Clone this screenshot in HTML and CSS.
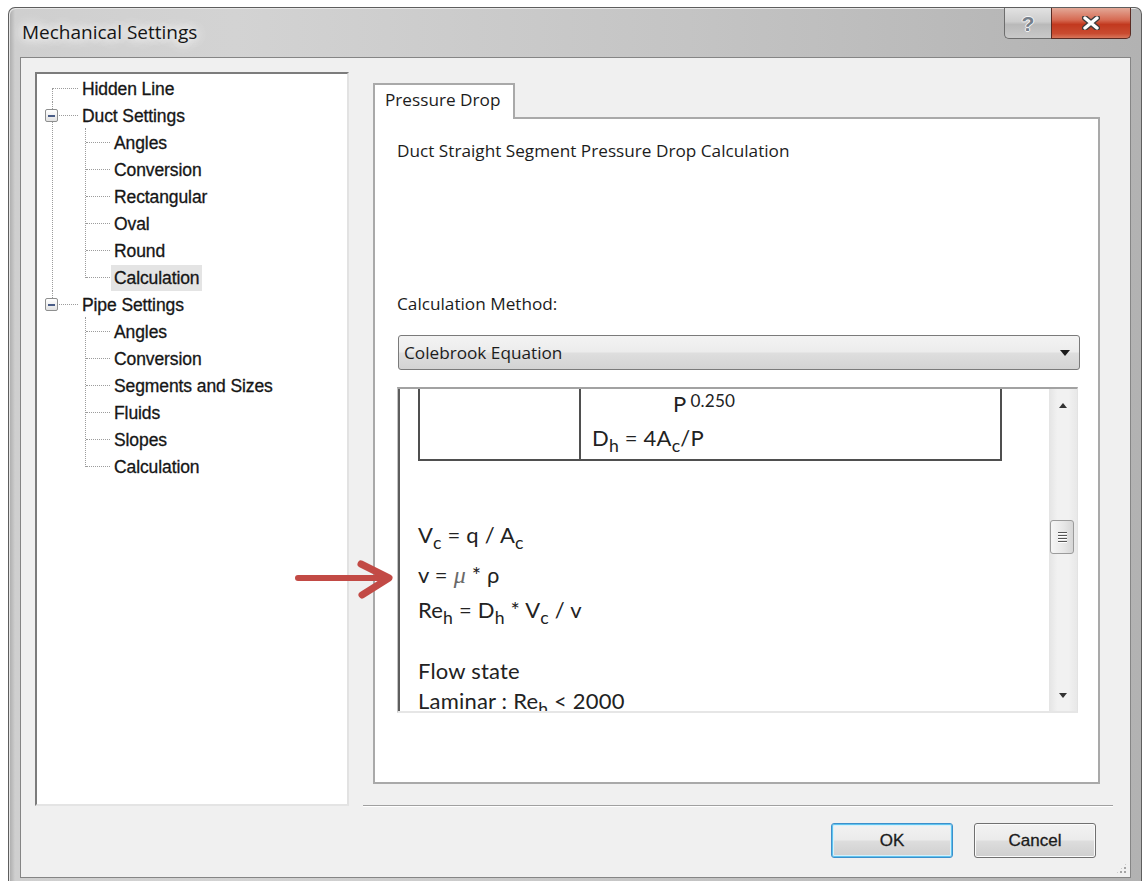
FILE: index.html
```html
<!DOCTYPE html>
<html lang="en">
<head>
<meta charset="utf-8">
<title>Mechanical Settings</title>
<link rel="stylesheet" href="styles.css">
</head>
<body>
<div class="window">
  <div class="titlebar">
    <span class="title">Mechanical Settings</span>
    <div class="caption-buttons">
      <div class="cap-btn help"><span class="help-glyph">?</span></div>
      <div class="cap-btn close">
        <svg width="18" height="14" viewBox="0 0 18 14">
          <path d="M3 2 L15 12 M15 2 L3 12" stroke="#3d3d3d" stroke-width="6" stroke-linecap="round"/>
          <path d="M3 2 L15 12 M15 2 L3 12" stroke="#ffffff" stroke-width="3.4" stroke-linecap="round"/>
        </svg>
      </div>
    </div>
  </div>

  <div class="client">
    <div class="tree">
      <ul class="tree-list root">
        <li class="node">
          <div class="row"><span class="expander empty"></span><span class="label">Hidden Line</span></div>
        </li>
        <li class="node">
          <div class="row"><span class="expander"></span><span class="label">Duct Settings</span></div>
          <ul class="tree-list children">
            <li class="leaf"><div class="row"><span class="label">Angles</span></div></li>
            <li class="leaf"><div class="row"><span class="label">Conversion</span></div></li>
            <li class="leaf"><div class="row"><span class="label">Rectangular</span></div></li>
            <li class="leaf"><div class="row"><span class="label">Oval</span></div></li>
            <li class="leaf"><div class="row"><span class="label">Round</span></div></li>
            <li class="leaf selected"><div class="row"><span class="label">Calculation</span></div></li>
          </ul>
        </li>
        <li class="node">
          <div class="row"><span class="expander"></span><span class="label">Pipe Settings</span></div>
          <ul class="tree-list children">
            <li class="leaf"><div class="row"><span class="label">Angles</span></div></li>
            <li class="leaf"><div class="row"><span class="label">Conversion</span></div></li>
            <li class="leaf"><div class="row"><span class="label">Segments and Sizes</span></div></li>
            <li class="leaf"><div class="row"><span class="label">Fluids</span></div></li>
            <li class="leaf"><div class="row"><span class="label">Slopes</span></div></li>
            <li class="leaf"><div class="row"><span class="label">Calculation</span></div></li>
          </ul>
        </li>
      </ul>
    </div>

    <div class="main">
      <div class="tabs">
        <div class="tab-strip">
          <div class="tab active">Pressure Drop</div>
          <div class="tab-fill"></div>
        </div>
        <div class="tab-panel">
          <p class="desc">Duct Straight Segment Pressure Drop Calculation</p>
          <span class="field-label">Calculation Method:</span>
          <div class="combo">
            <span class="combo-text">Colebrook Equation</span>
            <svg class="combo-arrow" width="10" height="6" viewBox="0 0 10 6"><path d="M0 0 H10 L5 6 Z" fill="#1a1a1a"/></svg>
          </div>
          <div class="formula-view">
            <div class="formula-page">
              <div class="ftable">
                <div class="fcell"></div>
                <div class="fcell">
                  <div class="fline power">P<sup>0.250</sup></div>
                  <div class="fline">D<sub>h</sub> = 4A<sub>c</sub>/P</div>
                </div>
              </div>
              <div class="eq eq-first">V<sub>c</sub> = q / A<sub>c</sub></div>
              <div class="eq eq-near">v = <i class="mu">μ</i> * ρ</div>
              <div class="eq eq-tight">Re<sub>h</sub> = D<sub>h</sub> * V<sub>c</sub> / v</div>
              <div class="eq eq-para">Flow state</div>
              <div class="eq eq-last">Laminar : Re<sub>h</sub> &lt; 2000</div>
            </div>
            <div class="vscroll">
              <div class="sb-btn"><svg width="8" height="5" viewBox="0 0 8 5"><path d="M0 5 L4 0 L8 5 Z" fill="#333"/></svg></div>
              <div class="sb-track">
                <div class="sb-thumb"><span></span><span></span><span></span><span></span></div>
              </div>
              <div class="sb-btn"><svg width="8" height="5" viewBox="0 0 8 5"><path d="M0 0 L8 0 L4 5 Z" fill="#333"/></svg></div>
            </div>
          </div>
        </div>
      </div>
      <div class="separator"></div>
      <div class="buttons">
        <button class="btn default">OK</button>
        <button class="btn">Cancel</button>
      </div>
    </div>
    <div class="grip"></div>
  </div>

  <svg class="callout" width="110" height="46" viewBox="0 0 110 46">
    <path d="M7 22 H94" stroke="#c24a45" stroke-width="6" stroke-linecap="round"/>
    <path d="M70 8 L98 22 L71 39" fill="none" stroke="#c24a45" stroke-width="7" stroke-linecap="round" stroke-linejoin="round"/>
  </svg>
</div>
</body>
</html>
```

FILE: styles.css
```css
html, body {
  margin: 0;
  padding: 0;
  overflow: hidden;
  background: #ffffff;
}

body {
  width: 1142px;
  height: 881px;
  font-family: "Open Sans", "Liberation Sans", sans-serif;
  color: #1c1c1c;
}

/* ---------- window frame ---------- */
.window {
  position: relative;
  margin: 7px 0 0 8px;
  width: 1134px;
  height: 874px;
  box-sizing: border-box;
  border: 1px solid #5e5e5e;
  border-bottom: none;
  border-radius: 7px 7px 0 0;
  padding: 0 10px 3px 11px;
  display: flex;
  flex-direction: column;
  background: linear-gradient(to right, #a9a9a9 0, #cfcfcf 6px, #d3d3d3 20%, #c4c4c4 60%, #b2b2b2 100%);
  box-shadow: inset 1px 1px 0 #e6e6e6;
}

.titlebar {
  height: 49px;
  display: flex;
  justify-content: space-between;
  align-items: flex-start;
  flex-shrink: 0;
}

.title {
  margin: 11px 0 0 2px;
  font-size: 19px;
  line-height: 26px;
  color: #151515;
  text-shadow: 0 0 8px #ffffff, 0 0 14px #ffffff, 0 0 18px #ffffff;
}

.caption-buttons {
  display: flex;
}

.cap-btn {
  height: 31px;
  box-sizing: border-box;
  display: flex;
  align-items: center;
  justify-content: center;
  border: 1px solid #6d6d6d;
  border-top: none;
}

.cap-btn.help {
  width: 47px;
  border-right: none;
  border-radius: 0 0 0 5px;
  background: linear-gradient(#e2e2e2 0%, #cdcdcd 45%, #b9b9b9 55%, #c9c9c9 100%);
}

.help-glyph {
  font: bold 21px/1 "Liberation Sans", sans-serif;
  color: #76808b;
  text-shadow: 1px 0 0 #f4f4f4, -1px 0 0 #f4f4f4, 0 1px 0 #f4f4f4, 0 -1px 0 #f4f4f4;
}

.cap-btn.close {
  width: 80px;
  border-color: #5a2b23;
  border-radius: 0 0 5px 0;
  background: linear-gradient(#e3a897 0%, #d66a52 40%, #c2391f 55%, #c94b30 85%, #d8765b 100%);
}

/* ---------- client area ---------- */
.client {
  position: relative;
  flex: 1;
  display: flex;
  border: 1px solid #858585;
  background: #f0f0f0;
  padding: 14px 0 0 14px;
}

.grip {
  position: absolute;
  right: 2px;
  bottom: 2px;
  width: 13px;
  height: 13px;
  background-image: radial-gradient(circle, #a4a4a4 0.9px, transparent 1.3px);
  background-size: 4px 4px;
  clip-path: polygon(100% 0, 100% 100%, 0 100%);
}

/* ---------- tree ---------- */
.tree {
  width: 314px;
  height: 734px;
  box-sizing: border-box;
  border-style: solid;
  border-width: 2px;
  border-color: #7c7c7c #e2e2e2 #e4e4e4 #7c7c7c;
  background: #ffffff;
  font-family: "Liberation Sans", Arial, sans-serif;
  font-size: 17.5px;
  color: #161616;
  -webkit-text-stroke: 0.3px #161616;
}

.tree-list {
  list-style: none;
  margin: 0;
  padding: 0;
}

.root {
  padding-top: 1px;
}

.node,
.children {
  position: relative;
}

.node::before {
  content: "";
  position: absolute;
  left: 15px;
  top: 0;
  bottom: 0;
  border-left: 1px dotted #9c9c9c;
}

.node:first-child::before {
  top: 13px;
}

.node:last-child::before {
  bottom: auto;
  height: 13px;
}

.row {
  position: relative;
  height: 27px;
  display: flex;
  align-items: center;
}

.node > .row {
  padding-left: 8px;
}

.node > .row::after {
  content: "";
  position: absolute;
  left: 16px;
  width: 25px;
  top: 13px;
  border-top: 1px dotted #9c9c9c;
}

.expander {
  position: relative;
  z-index: 1;
  width: 13px;
  height: 13px;
  box-sizing: border-box;
  margin-right: 21px;
  border: 1px solid #8e8f8f;
  border-radius: 2px;
  background: linear-gradient(#ffffff, #e2e2e2);
  display: flex;
  align-items: center;
  justify-content: center;
}

.expander::after {
  content: "";
  width: 7px;
  height: 2px;
  background: #4a5d87;
}

.expander.empty {
  visibility: hidden;
}

.children::before {
  content: "";
  position: absolute;
  left: 48px;
  top: -1px;
  bottom: 13px;
  border-left: 1px dotted #9c9c9c;
}

.leaf > .row {
  padding-left: 74px;
}

.leaf > .row::after {
  content: "";
  position: absolute;
  left: 49px;
  width: 24px;
  top: 13px;
  border-top: 1px dotted #9c9c9c;
}

.label {
  position: relative;
  z-index: 1;
  padding: 0 3px;
  line-height: 26px;
  white-space: nowrap;
  letter-spacing: -0.1px;
}

.selected .label {
  background: #e4e4e4;
}

/* ---------- right side ---------- */
.main {
  margin-left: 14px;
  width: 750px;
  padding-top: 11px;
  display: flex;
  flex-direction: column;
}

.tabs {
  padding: 0 13px 0 10px;
}

.tab-strip {
  display: flex;
  height: 36px;
}

.tab {
  width: 142px;
  box-sizing: border-box;
  border: 2px solid #a9a9a9;
  border-bottom: none;
  background: #ffffff;
  padding: 4px 0 0 10px;
  font-size: 17.2px;
  line-height: 22px;
}

.tab-fill {
  flex: 1;
  border-bottom: 2px solid #a9a9a9;
}

.tab-panel {
  height: 665px;
  box-sizing: border-box;
  border: 2px solid #a9a9a9;
  border-top: none;
  background: #ffffff;
  padding: 22px 18px 0 22px;
  font-size: 17.2px;
}

.desc {
  margin: 0;
  line-height: 20px;
}

.field-label {
  display: block;
  margin-top: 133px;
  line-height: 20px;
}

.combo {
  margin: 21px 0 0 1px;
  height: 35px;
  box-sizing: border-box;
  border: 1px solid #7a7a7a;
  border-radius: 3px;
  background: linear-gradient(#f3f3f3 0%, #ececec 48%, #dedede 52%, #d3d3d3 100%);
  display: flex;
  align-items: center;
  justify-content: space-between;
  padding: 0 9px 0 5px;
}

.combo-text {
  line-height: 20px;
}

/* formula viewer */
.formula-view {
  margin: 17px 2px 0 0;
  height: 326px;
  box-sizing: border-box;
  display: flex;
  border-top: 2px solid #a2a2a2;
  border-left: 1px solid #c4c4c4;
  border-right: 1px solid #e3e3e3;
  border-bottom: 2px solid #e6e6e6;
  box-shadow: inset 2px 0 0 #5e5e5e;
  overflow: hidden;
}

.formula-page {
  flex: 1;
  padding-left: 20px;
  font-family: Lato, "Open Sans", sans-serif;
  font-size: 22px;
  letter-spacing: 0.2px;
  color: #222222;
  overflow: hidden;
}

.ftable {
  display: grid;
  grid-template-columns: 159px 1fr;
  width: 584px;
  height: 72px;
  box-sizing: border-box;
  border: 2px solid #4f4f4f;
  border-top: none;
}

.fcell + .fcell {
  border-left: 2px solid #4f4f4f;
  padding-left: 11px;
}

.fline {
  height: 24px;
  line-height: 24px;
  white-space: nowrap;
}

.fline.power {
  margin-top: 3px;
  padding-left: 81px;
}

.fline + .fline {
  margin-top: 10px;
}

sup {
  font-size: 0.78em;
  line-height: 0;
  vertical-align: 0.28em;
  margin-left: 4px;
}

sub {
  font-size: 0.8em;
  line-height: 0;
  vertical-align: -0.35em;
}

.eq {
  height: 30px;
  line-height: 30px;
  white-space: nowrap;
}

.eq-first { margin-top: 59px; }
.eq-near { margin-top: 10px; }
.eq-tight { margin-top: 5px; }
.eq-para { margin-top: 31px; }
.eq-last { margin-top: 0; }

.mu {
  font-family: "Liberation Serif", serif;
  font-size: 24px;
  color: #6a6a6a;
}

.vscroll {
  width: 28px;
  flex-shrink: 0;
  display: flex;
  flex-direction: column;
  background: linear-gradient(to right, #e4e4e4, #f1f1f1 30%, #f1f1f1 70%, #e8e8e8);
}

.sb-btn {
  height: 32px;
  display: flex;
  align-items: center;
  justify-content: center;
}

.sb-track {
  flex: 1;
}

.sb-thumb {
  margin: 99px 3px 0 1px;
  height: 34px;
  box-sizing: border-box;
  border: 1px solid #9b9b9b;
  border-radius: 3px;
  background: linear-gradient(to right, #f6f6f6, #e6e6e6 60%, #d6d6d6);
  display: flex;
  flex-direction: column;
  align-items: center;
  justify-content: center;
  gap: 2px;
}

.sb-thumb span {
  width: 9px;
  height: 1px;
  background: #555555;
  box-shadow: 0 1px 0 #ffffff;
}

/* dialog footer */
.separator {
  margin-top: 21px;
  border-top: 1px solid #a0a0a0;
  border-bottom: 1px solid #ffffff;
}

.buttons {
  display: flex;
  justify-content: flex-end;
  gap: 21px;
  padding-right: 17px;
  margin-top: 16px;
}

.btn {
  width: 122px;
  height: 35px;
  margin: 0;
  box-sizing: border-box;
  border: 1px solid #707070;
  border-radius: 3px;
  background: linear-gradient(#f2f2f2 0%, #ebebeb 48%, #dddddd 52%, #cfcfcf 100%);
  font-family: "Liberation Sans", Arial, sans-serif;
  font-size: 17px;
  color: #1a1a1a;
  -webkit-text-stroke: 0.3px #1a1a1a;
  box-shadow: inset 0 0 0 1px #fbfbfb;
  padding: 0;
}

.btn.default {
  border-color: #3c8fcb;
  box-shadow: inset 0 0 0 1px #5fc3ee, inset 0 0 0 2px #d6f0fb;
}

/* annotation arrow */
.callout {
  position: absolute;
  left: 282px;
  top: 548px;
}
```
